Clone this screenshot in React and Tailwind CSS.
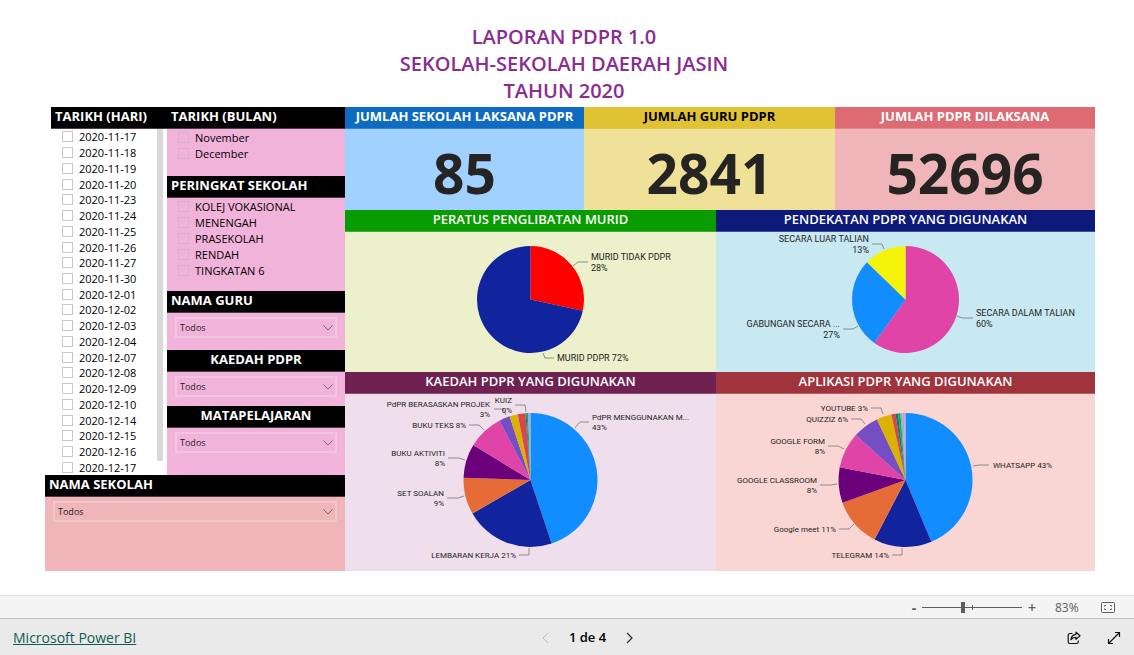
const DATES = [
  '2020-11-17', '2020-11-18', '2020-11-19', '2020-11-20', '2020-11-23', '2020-11-24',
  '2020-11-25', '2020-11-26', '2020-11-27', '2020-11-30', '2020-12-01', '2020-12-02',
  '2020-12-03', '2020-12-04', '2020-12-07', '2020-12-08', '2020-12-09', '2020-12-10',
  '2020-12-14', '2020-12-15', '2020-12-16', '2020-12-17',
]
const MONTHS = ['November', 'December']
const LEVELS = ['KOLEJ VOKASIONAL', 'MENENGAH', 'PRASEKOLAH', 'RENDAH', 'TINGKATAN 6']

// slices: [end angle in degrees clockwise from the top, colour]
// labels: x, y = baseline of the first line, line = leader polyline
const MURID = {
  cx: 185.5, cy: 67.5, r: 53.5, w: 371, h: 140, size: 9, lead: 11,
  slices: [[102.2, '#ff0000'], [360, '#12239e']],
  labels: [
    { x: 246, y: 28, text: ['MURID TIDAK PDPR', '28%'], line: '228,34 233,30 243,30' },
    { x: 212, y: 129, text: ['MURID PDPR 72%'], line: '198,121 200,126 209,126' },
  ],
}
const PENDEKATAN = {
  cx: 189.5, cy: 67.5, r: 53.5, w: 379, h: 140, size: 9, lead: 11,
  slices: [[215.7, '#e044a7'], [314, '#118dff'], [360, '#f7f40c']],
  labels: [
    { x: 153, y: 10, end: true, text: ['SECARA LUAR TALIAN', '13%'], line: '156,12 166,12 168,17' },
    { x: 124, y: 95, end: true, text: ['GABUNGAN SECARA ...', '27%'], line: '127,97 137,97 142,94' },
    { x: 260, y: 84, text: ['SECARA DALAM TALIAN', '60%'], line: '241,84 246,86 257,86' },
  ],
}
const KAEDAH = {
  cx: 185.5, cy: 86, r: 67, w: 371, h: 177, size: 8, lead: 10,
  slices: [
    [161.6, '#118dff'], [240, '#12239e'], [272, '#e66c37'], [301.5, '#6b007b'],
    [332.3, '#e044a7'], [341.8, '#744ec2'], [349, '#d9b300'], [355.6, '#d64550'],
    [356.6, '#197278'], [357.9, '#1aab40'], [358.9, '#4ac5f0'], [360, '#b88fd0'],
  ],
  labels: [
    { x: 145, y: 13, end: true, text: ['PdPR BERASASKAN PROJEK', '3%'], line: '149,15 158,15 161,21' },
    { x: 167, y: 9, end: true, text: ['KUIZ', '0%'], line: '170,11 180,11 181,18' },
    { x: 121, y: 34, end: true, text: ['BUKU TEKS 8%'], line: '124,31 134,31 139,36' },
    { x: 100, y: 62, end: true, text: ['BUKU AKTIVITI', '8%'], line: '103,64 114,64 120,66' },
    { x: 99, y: 102, end: true, text: ['SET SOALAN', '9%'], line: '102,104 113,104 119,102' },
    { x: 171, y: 164, end: true, text: ['LEMBARAN KERJA 21%'], line: '174,161 184,161 184,154' },
    { x: 247, y: 26, text: ['PdPR MENGGUNAKAN M...', '43%'], line: '230,34 235,28 244,28' },
  ],
}
const APLIKASI = {
  cx: 189.5, cy: 86, r: 67, w: 379, h: 177, size: 8, lead: 10,
  slices: [
    [157.3, '#118dff'], [207.5, '#12239e'], [250.2, '#e66c37'], [280.9, '#6b007b'],
    [312.2, '#e044a7'], [334.8, '#744ec2'], [347.8, '#d9b300'], [351.4, '#d64550'],
    [353.6, '#197278'], [355.7, '#1aab40'], [357.2, '#4ac5f0'], [358.8, '#e68fc0'],
    [360, '#b8a8e0'],
  ],
  labels: [
    { x: 152, y: 17, end: true, text: ['YOUTUBE 3%'], line: '155,14 165,14 167,20' },
    { x: 132, y: 28, end: true, text: ['QUIZZIZ 6%'], line: '135,25 145,25 149,30' },
    { x: 109, y: 50, end: true, text: ['GOOGLE FORM', '8%'], line: '112,52 122,52 128,55' },
    { x: 101, y: 89, end: true, text: ['GOOGLE CLASSROOM', '8%'], line: '104,91 115,91 121,90' },
    { x: 120, y: 138, end: true, text: ['Google meet 11%'], line: '123,135 133,135 138,130' },
    { x: 173, y: 164, end: true, text: ['TELEGRAM 14%'], line: '176,161 186,161 186,154' },
    { x: 277, y: 74, text: ['WHATSAPP 43%'], line: '257,72 263,71 273,71' },
  ],
}

function arc({ cx, cy, r }, from, to) {
  const point = (deg) => {
    const a = (deg * Math.PI) / 180
    return `${cx + r * Math.sin(a)} ${cy - r * Math.cos(a)}`
  }
  return `M${cx} ${cy}L${point(from)}A${r} ${r} 0 ${to - from > 180 ? 1 : 0} 1 ${point(to)}Z`
}

function Pie({ data, title }) {
  return (
    <svg
      viewBox={`0 0 ${data.w} ${data.h}`}
      height={data.h}
      className="block w-full"
      role="img"
      aria-label={title}
    >
      {data.slices.map(([to, fill], i) => (
        <path key={i} d={arc(data, i ? data.slices[i - 1][0] : 0, to)} fill={fill} />
      ))}
      {data.labels.map((l) => (
        <g key={l.text[0]}>
          <polyline points={l.line} fill="none" stroke="#777" strokeWidth="0.8" />
          <text
            fontSize={data.size}
            textAnchor={l.end ? 'end' : 'start'}
            fill="#252423"
            className="font-[Roboto,sans-serif]"
          >
            {l.text.map((t, i) => (
              <tspan key={t} x={l.x} y={l.y + i * data.lead}>{t}</tspan>
            ))}
          </text>
        </g>
      ))}
    </svg>
  )
}

function Heading({ children, weight = 'font-bold', className = '' }) {
  return (
    <h2 className={`h-[22px] shrink-0 border-b px-1 text-[13px] leading-[19px] whitespace-nowrap ${weight} ${className}`}>
      {children}
    </h2>
  )
}

function SlicerHeading({ children, className = '' }) {
  return <Heading className={`border-[#4a3b45] bg-black text-white ${className}`}>{children}</Heading>
}

function CheckItem({ label, boxClass = 'border-[#c8c8c8]', className = '' }) {
  return (
    <label className={`flex items-center text-[11px] leading-none text-black ${className}`}>
      <input type="checkbox" className={`mr-1.5 size-[11px] shrink-0 appearance-none border ${boxClass}`} />
      {label}
    </label>
  )
}

function Dropdown({ label, border }) {
  return (
    <div className="relative">
      <select
        aria-label={label}
        className={`block h-[21px] w-full appearance-none border-2 pl-[3px] text-[9px] text-[#252423] ${border}`}
      >
        <option>Todos</option>
      </select>
      <svg viewBox="0 0 10 6" className="pointer-events-none absolute top-2 right-1 h-[6px] w-[10px]" fill="none" stroke="#555" strokeWidth="0.8">
        <path d="M0.5 0.5L5 5L9.5 0.5" />
      </svg>
    </div>
  )
}

function Kpi({ title, value, head, body }) {
  return (
    <section className={body}>
      <Heading className={`text-center ${head}`}>{title}</Heading>
      <p className="h-[81px] text-center text-[55px] leading-[88px] font-bold text-[#252423]">{value}</p>
    </section>
  )
}

function ChartPanel({ title, data, head, body }) {
  return (
    <section className={body}>
      <Heading weight="font-semibold" className={`text-center text-white ${head}`}>{title}</Heading>
      <Pie data={data} title={title} />
    </section>
  )
}

function Filters() {
  return (
    <div className="flex w-[300px] shrink-0 flex-col">
      <div className="flex grow pl-1.5">
        <section className="flex w-[116px] flex-col">
          <SlicerHeading>TARIKH (HARI)</SlicerHeading>
          <div className="flex grow">
            <div className="flex grow flex-col pl-[11px]">
              {DATES.map((d) => (
                <CheckItem key={d} label={d} className="flex-1" />
              ))}
            </div>
            <div className="mr-1 mb-3.5 w-1.5 bg-[#d9d9d9]" />
          </div>
        </section>

        <div className="flex grow flex-col bg-[#f2b3da]">
          <SlicerHeading>TARIKH (BULAN)</SlicerHeading>
          <div className="flex h-[47px] flex-col pl-[11px]">
            {MONTHS.map((m) => (
              <CheckItem key={m} label={m} boxClass="border-[#d3b5c8]" className="h-4" />
            ))}
          </div>
          <SlicerHeading>PERINGKAT SEKOLAH</SlicerHeading>
          <div className="flex h-[93px] flex-col pl-[11px]">
            {LEVELS.map((l) => (
              <CheckItem key={l} label={l} boxClass="border-[#d3b5c8]" className="h-4" />
            ))}
          </div>
          <SlicerHeading>NAMA GURU</SlicerHeading>
          <div className="h-[37px] px-2 pt-1">
            <Dropdown label="NAMA GURU" border="border-[#f2c6e1]" />
          </div>
          <SlicerHeading className="text-center">KAEDAH PDPR</SlicerHeading>
          <div className="h-[34px] px-2 pt-1">
            <Dropdown label="KAEDAH PDPR" border="border-[#f2c6e1]" />
          </div>
          <SlicerHeading className="text-center">MATAPELAJARAN</SlicerHeading>
          <div className="px-2 pt-1">
            <Dropdown label="MATAPELAJARAN" border="border-[#f2c6e1]" />
          </div>
        </div>
      </div>

      <section className="h-24 bg-[#efb5b9]">
        <SlicerHeading>NAMA SEKOLAH</SlicerHeading>
        <div className="px-2 pt-1">
          <Dropdown label="NAMA SEKOLAH" border="border-[#efc8cb]" />
        </div>
      </section>
    </div>
  )
}

function ZoomBar() {
  return (
    <div className="flex h-6 items-center justify-end border-t border-[#e0e0e0] bg-[#f4f4f4] pr-[19px] text-[#605e5c]">
      <button aria-label="Zoom out" className="w-2.5 text-center text-sm leading-none font-bold">-</button>
      <div className="relative mr-1 ml-[3px] flex w-[100px] items-center">
        <input
          type="range"
          aria-label="Zoom"
          min="0"
          max="100"
          defaultValue="41"
          className="h-px w-full appearance-none bg-[#605e5c] [&::-webkit-slider-thumb]:h-[11px] [&::-webkit-slider-thumb]:w-1 [&::-webkit-slider-thumb]:appearance-none [&::-webkit-slider-thumb]:bg-[#605e5c]"
        />
        <span className="absolute left-[50px] h-[5px] w-px bg-[#605e5c]" />
      </div>
      <button aria-label="Zoom in" className="w-3 text-center text-sm leading-none font-semibold">+</button>
      <span className="ml-[17px] w-[26px] text-xs">83%</span>
      <button aria-label="Fit to page" className="ml-5">
        <svg viewBox="0 0 14 11" className="h-[11px] w-[14px]" fill="none" stroke="#605e5c">
          <rect x="0.5" y="0.5" width="13" height="10" rx="1" />
          <path d="M5 3.5H3.5V4.5M9 3.5H10.5V4.5M5 7.5H3.5V6.5M9 7.5H10.5V6.5" />
        </svg>
      </button>
    </div>
  )
}

function Footer() {
  return (
    <footer className="grid h-9 grid-cols-[1fr_auto_1fr] items-center bg-[#eaeaea] px-[13px] pt-0.5 text-[13px] shadow-[0_-1px_0_#c4c4c4]">
      <a href="#" className="justify-self-start text-sm text-[#0f5c56] underline">Microsoft Power BI</a>
      <nav className="flex items-center pl-[41px]">
        <button aria-label="Previous page" disabled className="text-[#bbb]">
          <svg viewBox="0 0 7 12" className="h-3 w-[7px]" fill="none" stroke="currentColor"><path d="M6 1L1 6L6 11" /></svg>
        </button>
        <span className="px-5 font-semibold text-black">1 de 4</span>
        <button aria-label="Next page" className="text-[#333]">
          <svg viewBox="0 0 7 12" className="h-3 w-[7px]" fill="none" stroke="currentColor" strokeWidth="1.3"><path d="M1 1L6 6L1 11" /></svg>
        </button>
      </nav>
      <div className="flex items-center gap-[26px] justify-self-end text-[#111]">
        <button aria-label="Share">
          <svg viewBox="0 0 14 14" className="size-[14px]" fill="none" stroke="currentColor" strokeWidth="1.2" strokeLinejoin="round">
            <path d="M5.5 2.5H3A1.8 1.8 0 0 0 1.2 4.3V10.7A1.8 1.8 0 0 0 3 12.5H9.5A1.8 1.8 0 0 0 11.3 10.7V9.5" />
            <path d="M9 1.2L13 4.8L9 8.4V6.4C6.5 6.3 5 7 3.9 8.8C4.2 5.5 5.8 3.6 9 3.3Z" />
          </svg>
        </button>
        <button aria-label="Full screen">
          <svg viewBox="0 0 14 14" className="size-[14px]" fill="none" stroke="currentColor" strokeWidth="1.2">
            <path d="M1.5 12.5L12.5 1.5M8 1.5H12.5V6M1.5 8V12.5H6" />
          </svg>
        </button>
      </div>
    </footer>
  )
}

export default function App() {
  return (
    <div className="flex min-h-screen flex-col bg-white font-['Open_Sans','Noto_Sans',sans-serif]">
      <main className="pt-[23px] pr-[39px] pb-6 pl-[45px]">
        <h1 className="mb-[3px] pr-3 text-center text-[20px] leading-[27px] font-semibold text-[#8a2d91]">
          LAPORAN PDPR 1.0<br />SEKOLAH-SEKOLAH DAERAH JASIN<br />TAHUN 2020
        </h1>
        <div className="flex">
          <Filters />
          <div className="grow">
            <div className="grid grid-cols-[239fr_251fr_260fr]">
              <Kpi title="JUMLAH SEKOLAH LAKSANA PDPR" value="85" head="border-[#3683ca] bg-[#0f6bc2] text-white" body="bg-[#a0d1ff]" />
              <Kpi title="JUMLAH GURU PDPR" value="2841" head="border-[#dfc652] bg-[#e0c233] text-black" body="bg-[#f0e199]" />
              <Kpi title="JUMLAH PDPR DILAKSANA" value="52696" head="border-[#e0838b] bg-[#de6a73] text-white" body="bg-[#efb5b9]" />
            </div>
            <div className="grid grid-cols-[371fr_379fr]">
              <ChartPanel title="PERATUS PENGLIBATAN MURID" data={MURID} head="border-[#3cae31] bg-[#099c00]" body="bg-[#ecf0cb]" />
              <ChartPanel title="PENDEKATAN PDPR YANG DIGUNAKAN" data={PENDEKATAN} head="border-[#414f98] bg-[#0d1a7a]" body="bg-[#c8e8f2]" />
              <ChartPanel title="KAEDAH PDPR YANG DIGUNAKAN" data={KAEDAH} head="border-[#8c5078] bg-[#6f2252]" body="bg-[#efdeeb]" />
              <ChartPanel title="APLIKASI PDPR YANG DIGUNAKAN" data={APLIKASI} head="border-[#b75d63] bg-[#a0343d]" body="bg-[#f9d5d4]" />
            </div>
          </div>
        </div>
      </main>
      <div className="mt-auto">
        <ZoomBar />
        <Footer />
      </div>
    </div>
  )
}
